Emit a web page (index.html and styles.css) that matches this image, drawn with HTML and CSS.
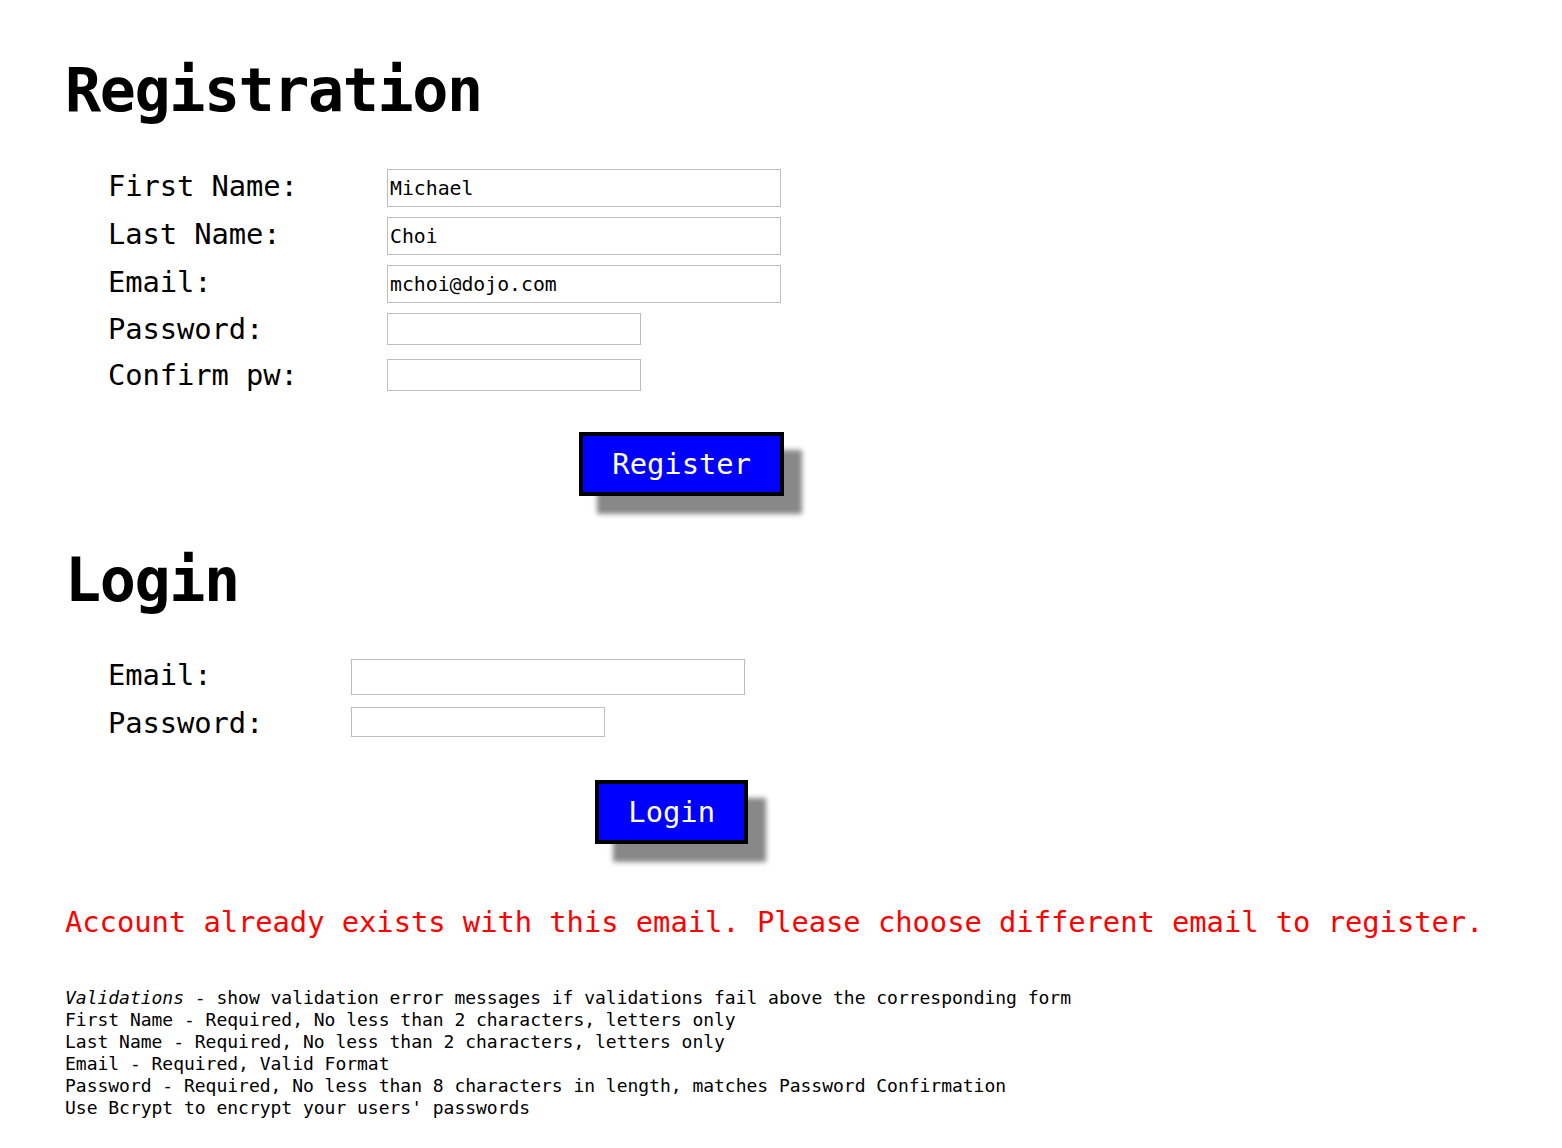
FILE: index.html
```html
<!DOCTYPE html>
<html lang="en">
<head>
<meta charset="utf-8">
<title>Registration</title>
<link rel="stylesheet" href="styles.css">
</head>
<body>
<main class="page">
  <h1 class="title title-reg">Registration</h1>
  <form class="form form-reg">
    <div class="grid grid-reg">
      <label class="label" for="fn">First Name:</label>
      <input class="field field-text" id="fn" type="text" value="Michael">
      <label class="label" for="ln">Last Name:</label>
      <input class="field field-text" id="ln" type="text" value="Choi">
      <label class="label" for="em">Email:</label>
      <input class="field field-text" id="em" type="text" value="mchoi@dojo.com">
      <label class="label" for="pw">Password:</label>
      <input class="field field-pw" id="pw" type="password">
      <label class="label" for="cpw">Confirm pw:</label>
      <input class="field field-pw" id="cpw" type="password">
    </div>
    <div class="actions actions-reg">
      <button class="btn" type="button">Register</button>
    </div>
  </form>

  <h1 class="title title-login">Login</h1>
  <form class="form form-login">
    <div class="grid grid-login">
      <label class="label" for="lem">Email:</label>
      <input class="field field-text-l" id="lem" type="text">
      <label class="label" for="lpw">Password:</label>
      <input class="field field-pw-l" id="lpw" type="password">
    </div>
    <div class="actions actions-login">
      <button class="btn" type="button">Login</button>
    </div>
  </form>

  <p class="error">Account already exists with this email. Please choose different email to register.</p>

  <div class="notes">
    <div><em>Validations</em> - show validation error messages if validations fail above the corresponding form</div>
    <div>First Name - Required, No less than 2 characters, letters only</div>
    <div>Last Name - Required, No less than 2 characters, letters only</div>
    <div>Email - Required, Valid Format</div>
    <div>Password - Required, No less than 8 characters in length, matches Password Confirmation</div>
    <div>Use Bcrypt to encrypt your users' passwords</div>
  </div>
</main>
</body>
</html>
```

FILE: styles.css
```css
html, body {
  margin: 0;
  padding: 0;
  background: #ffffff;
}

body {
  font-family: "DejaVu Sans Mono", "Liberation Mono", monospace;
  color: #000000;
}

.page {
  padding: 0 0 0 65px;
}

.title {
  font-size: 60px;
  letter-spacing: -1.4px;
  line-height: 72px;
  font-weight: bold;
  margin: 0;
}

.title-reg {
  margin-top: 54px;
}

.title-login {
  margin-top: 48px;
}

.form {
  margin: 43px 0 0 41px;
  display: flex;
  flex-direction: column;
  width: max-content;
}

.grid {
  display: grid;
  align-items: center;
}

.grid-reg {
  grid-template-columns: 281px 394px;
  row-gap: 10px;
}

.grid-login {
  grid-template-columns: 245px 394px;
  row-gap: 12px;
}

.label {
  font-size: 28.8px;
  letter-spacing: -0.08px;
  line-height: 32px;
  padding: 0 0 4px 2px;
}

.field {
  box-sizing: border-box;
  align-self: start;
  border: 1px solid #bdbdbd;
  border-radius: 0;
  padding: 0 2px;
  margin: 0;
  font-family: "DejaVu Sans Mono", "Liberation Mono", monospace;
  font-size: 19.8px;
  color: #000000;
  background: #ffffff;
  outline: none;
}

.field-text { width: 394px; height: 38px; }
.field-pw { width: 254px; height: 32px; }
.field-text-l { width: 394px; height: 36px; }
.field-pw-l { width: 254px; height: 30px; }

.actions {
  display: flex;
  justify-content: flex-end;
  margin-right: -3px;
}

.actions-reg { margin-top: 37px; }
.actions-login { margin-top: 37px; }

.btn {
  box-sizing: border-box;
  height: 64px;
  padding: 0 29px;
  border: 4px solid #000000;
  border-radius: 0;
  background: #0000ff;
  color: #ffffff;
  font-family: "DejaVu Sans Mono", "Liberation Mono", monospace;
  font-size: 28.8px;
  line-height: 56px;
  box-shadow: 18px 18px 5px #888888;
  cursor: pointer;
}

.error {
  color: #ff0000;
  font-size: 28.8px;
  letter-spacing: -0.04px;
  line-height: 36px;
  margin: 60px 0 0 0;
}

.notes {
  margin-top: 47px;
  font-size: 18px;
  letter-spacing: -0.02px;
  line-height: 22px;
}

.notes em {
  font-style: italic;
}
```
